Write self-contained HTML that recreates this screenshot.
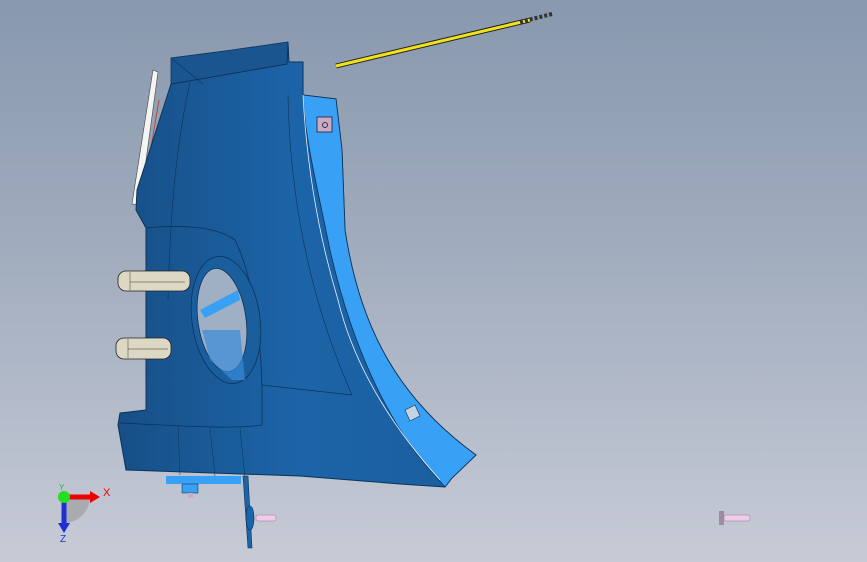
<!DOCTYPE html>
<html><head><style>
html,body{margin:0;padding:0}
body{width:867px;height:562px;overflow:hidden;background:linear-gradient(#8898ae 0%,#a4afc0 50%,#c7cbd6 100%);font-family:"Liberation Sans",sans-serif}
svg{display:block}
</style></head><body>
<svg width="867" height="562" viewBox="0 0 867 562" xmlns="http://www.w3.org/2000/svg">
<defs>
<linearGradient id="bd" x1="0" x2="1" y1="0" y2="0"><stop offset="0" stop-color="#174f86"/><stop offset="0.5" stop-color="#1c64a8"/><stop offset="1" stop-color="#1a5e9e"/></linearGradient>
</defs>
<line x1="336" y1="66" x2="530" y2="20" stroke="#222" stroke-width="5"/>
<line x1="336" y1="66" x2="530" y2="20" stroke="#f2e21a" stroke-width="3"/>
<line x1="520" y1="22" x2="552" y2="14" stroke="#333" stroke-width="4" stroke-dasharray="3 2"/>
<polygon points="153,70 158,72 140,205 132,204" fill="#f4f4f4" stroke="#444" stroke-width="0.6"/>
<line x1="159" y1="100" x2="143" y2="195" stroke="#b05040" stroke-width="1"/>
<path d="M171,84 L287,64 L288,42 L289,62 L303,62 L303,95 L336,99 L342,150 L345,230 C360,330 400,400 476,455 L452,478 L445,487 L400,484 L300,476 L126,470 L118,425 L120,413 L146,410 L146,228 L136,210 L137,190 Z" fill="url(#bd)" stroke="#0c3358" stroke-width="1"/>
<path d="M303,95 L336,99 L342,150 L345,230 C360,330 400,400 476,455 L452,478 L445,487 L430,470 C395,430 355,360 330,250 C318,190 305,140 303,95 Z" fill="#38a0f5" stroke="#0c3358" stroke-width="0.8"/>
<path d="M303,95 C307,170 320,240 338,300 C355,370 395,430 440,480" fill="none" stroke="#e8f0ff" stroke-width="0.8"/>
<polygon points="171,84 287,64 288,42 232,50 171,58" fill="#1a5590" stroke="#0c3358" stroke-width="0.8"/>
<line x1="171" y1="58" x2="203" y2="84" stroke="#0c3358" stroke-width="0.6"/>
<path d="M190,82 C175,150 170,220 168,300" fill="none" stroke="#0c3358" stroke-width="0.6"/>
<path d="M288,95 C290,200 310,300 352,395" fill="none" stroke="#0c3358" stroke-width="0.6"/>
<line x1="262" y1="385" x2="352" y2="395" stroke="#0c3358" stroke-width="0.8"/>
<path d="M120,423 C170,425 230,430 262,425 L262,398" fill="none" stroke="#0c3358" stroke-width="0.8"/>
<path d="M146,228 C175,225 215,225 235,240 C250,270 262,330 262,398" fill="none" stroke="#0c3358" stroke-width="0.8"/>
<line x1="178" y1="425" x2="180" y2="475" stroke="#0c3358" stroke-width="0.5"/>
<line x1="210" y1="428" x2="215" y2="476" stroke="#0c3358" stroke-width="0.5"/>
<line x1="240" y1="428" x2="245" y2="478" stroke="#0c3358" stroke-width="0.5"/>
<ellipse cx="226" cy="320" rx="34" ry="64" transform="rotate(-8 226 320)" fill="#1a5e9e" stroke="#0c3358" stroke-width="0.8"/>
<ellipse cx="222" cy="320" rx="24" ry="52" transform="rotate(-8 222 320)" fill="#9fb0c5" stroke="#0c3358" stroke-width="0.8"/>
<polygon points="200,310 238,290 240,300 205,318" fill="#38a0f5"/>
<polygon points="202,330 240,330 245,380 232,380 210,360" fill="#3a8ad8" opacity="0.7"/>
<rect x="118" y="271" width="72" height="20" rx="8" fill="#ddd8c3" stroke="#222" stroke-width="0.8"/>
<line x1="130" y1="272" x2="130" y2="290" stroke="#555" stroke-width="0.6"/>
<line x1="130" y1="282" x2="185" y2="282" stroke="#333" stroke-width="0.6"/>
<rect x="116" y="338" width="55" height="21" rx="8" fill="#ddd8c3" stroke="#222" stroke-width="0.8"/>
<line x1="128" y1="339" x2="128" y2="358" stroke="#555" stroke-width="0.6"/>
<line x1="128" y1="349" x2="168" y2="349" stroke="#333" stroke-width="0.6"/>
<rect x="317" y="117" width="15" height="15" fill="#c9a8c8" stroke="#222" stroke-width="0.8"/>
<circle cx="325" cy="125" r="2.5" fill="none" stroke="#333"/>
<polygon points="405,410 415,405 420,416 410,421" fill="#c5d3e0" stroke="#0c3358" stroke-width="0.6"/>
<rect x="166" y="476" width="75" height="8" fill="#38a0f5"/>
<rect x="182" y="484" width="16" height="9" fill="#38a0f5" stroke="#123" stroke-width="0.5"/>
<rect x="188" y="493" width="5" height="5" fill="#c9a8c8"/>
<polygon points="243,476 248,476 252,548 248,548" fill="#1c64a8" stroke="#0c3358" stroke-width="0.6"/>
<ellipse cx="250" cy="518" rx="4" ry="12" fill="#1c64a8" stroke="#0c3358" stroke-width="0.6"/>
<rect x="256" y="515" width="20" height="6" rx="2" fill="#f1c8ee" stroke="#888" stroke-width="0.5"/>
<rect x="719" y="511" width="5" height="14" fill="#a08aa4"/>
<rect x="724" y="515" width="26" height="6" rx="2" fill="#f1c8ee" stroke="#888" stroke-width="0.5"/>
<path d="M64,497 L90,497 A26,26 0 0 1 64,523 Z" fill="#999" opacity="0.6"/>
<line x1="64" y1="497" x2="92" y2="497" stroke="#e00" stroke-width="5"/>
<polygon points="90,491 100,497 90,503" fill="#e00"/>
<text x="103" y="496" fill="#e00" font-size="11">X</text>
<line x1="64" y1="497" x2="64" y2="525" stroke="#2030d0" stroke-width="5"/>
<polygon points="58,523 70,523 64,533" fill="#2030d0"/>
<text x="60" y="542" fill="#2030d0" font-size="10">Z</text>
<circle cx="64" cy="497" r="6" fill="#20e020"/>
<text x="59" y="490" fill="#20c020" font-size="8">Y</text>
</svg>
</body></html>
